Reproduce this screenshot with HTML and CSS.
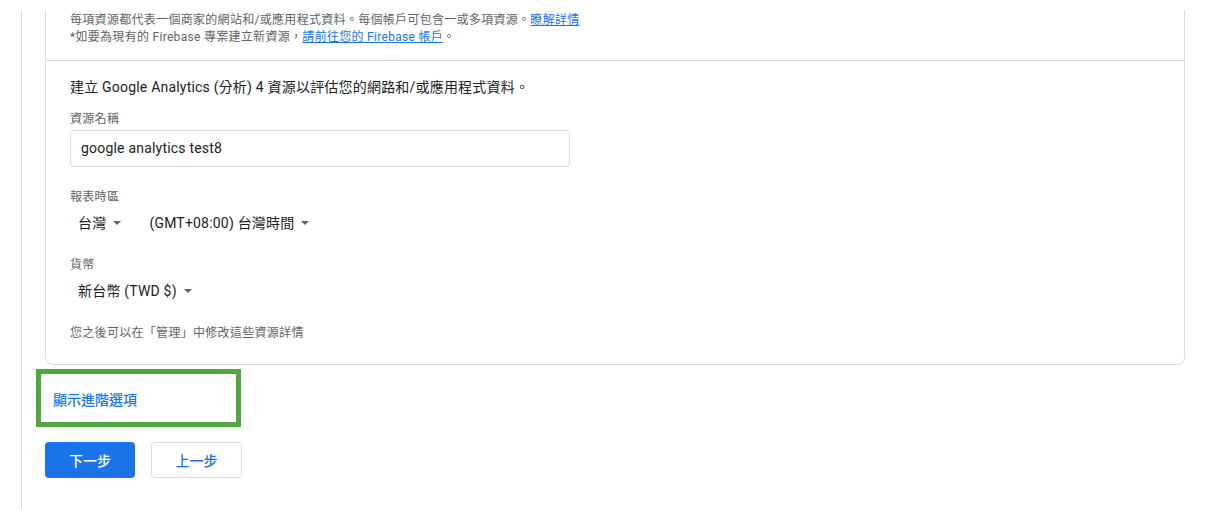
FILE: index.html
```html
<!DOCTYPE html>
<html lang="zh-Hant">
<head>
<meta charset="utf-8">
<link rel="stylesheet" href="styles.css">
</head>
<body>
<div class="page">
  <div class="card">
    <div class="card-top">
      <p class="note">每項資源都代表一個商家的網站和/或應用程式資料。每個帳戶可包含一或多項資源。<a href="#">瞭解詳情</a></p>
      <p class="note">*如要為現有的 Firebase 專案建立新資源，<a href="#">請前往您的 Firebase 帳戶</a>。</p>
    </div>
    <div class="card-body">
      <p class="title">建立 Google Analytics (分析) 4 資源以評估您的網路和/或應用程式資料。</p>
      <div class="label label-first">資源名稱</div>
      <div class="input">google analytics test8</div>
      <div class="label">報表時區</div>
      <div class="selects">
        <div class="select">台灣<span class="caret"></span></div>
        <div class="select">(GMT+08:00) 台灣時間<span class="caret"></span></div>
      </div>
      <div class="label label-currency">貨幣</div>
      <div class="selects">
        <div class="select">新台幣 (TWD $)<span class="caret"></span></div>
      </div>
      <div class="hint">您之後可以在「管理」中修改這些資源詳情</div>
    </div>
  </div>
  <div class="advanced">
    <a href="#" class="advanced-link">顯示進階選項</a>
  </div>
  <div class="actions">
    <button class="btn btn-primary">下一步</button>
    <button class="btn btn-secondary">上一步</button>
  </div>
</div>
</body>
</html>
```
FILE: styles.css
```css
* { box-sizing: border-box; }
html, body { margin: 0; padding: 0; background: #fff; }
body {
  font-family: Roboto, "Noto Sans CJK TC", "Noto Sans", sans-serif;
  color: #202124;
  overflow: hidden;
}
.page {
  margin: 10px 0 0 21px;
  height: 499px;
  border-left: 1px solid #dadce0;
  padding-left: 23px;
}
.card {
  width: 1140px;
  border: 1px solid #dadce0;
  border-top: none;
  border-radius: 0 0 8px 8px;
}
.card-top {
  padding: 2px 24px 14px 24px;
  border-bottom: 1px solid #dadce0;
}
.note {
  margin: 0;
  font-size: 12px;
  line-height: 17px;
  letter-spacing: 0.3px;
  color: #5f6368;
}
.note a { color: #1a73e8; text-decoration: underline; }
.card-body {
  padding: 16px 24px 23px 24px;
}
.title {
  margin: 0;
  font-size: 14px;
  line-height: 20px;
  letter-spacing: 0.2px;
  color: #202124;
}
.label {
  font-size: 12px;
  line-height: 16px;
  letter-spacing: 0.3px;
  color: #5f6368;
  margin-top: 22px;
  margin-bottom: 8px;
}
.label-first { margin-top: 14px; margin-bottom: 3px; }
.label-currency { margin-top: 24px; }
.input {
  width: 500px;
  height: 37px;
  border: 1px solid #dadce0;
  border-radius: 4px;
  padding: 0 10px;
  font-size: 14px;
  line-height: 35px;
  letter-spacing: 0.2px;
  color: #202124;
}
.selects {
  display: flex;
  gap: 28px;
  padding-left: 8px;
}
.select {
  display: flex;
  align-items: center;
  font-size: 14px;
  line-height: 20px;
  letter-spacing: 0.2px;
  color: #202124;
}
.caret {
  display: inline-block;
  width: 0;
  height: 0;
  margin-left: 7px;
  border-left: 4px solid transparent;
  border-right: 4px solid transparent;
  border-top: 4px solid #5f6368;
}
.hint {
  margin-top: 24px;
  font-size: 12px;
  line-height: 16px;
  letter-spacing: 0.3px;
  color: #5f6368;
}
.advanced {
  margin: 4px 0 0 -9px;
  width: 205px;
  height: 58px;
  border: 5px solid #4fa83d;
  display: flex;
  align-items: center;
  padding-left: 12px;
}
.advanced-link {
  font-size: 14px;
  font-weight: 500;
  color: #1a73e8;
  text-decoration: none;
  line-height: 20px;
  margin-top: 3px;
}
.actions {
  display: flex;
  gap: 16px;
  margin-top: 15px;
}
.btn {
  width: 90px;
  height: 36px;
  border-radius: 4px;
  font-family: Roboto, "Noto Sans CJK TC", sans-serif;
  font-size: 14px;
  font-weight: 500;
  cursor: pointer;
}
.btn-primary {
  background: #1a73e8;
  color: #fff;
  border: none;
}
.btn-secondary {
  width: 91px;
  background: #fff;
  color: #1a73e8;
  border: 1px solid #dadce0;
}
```
